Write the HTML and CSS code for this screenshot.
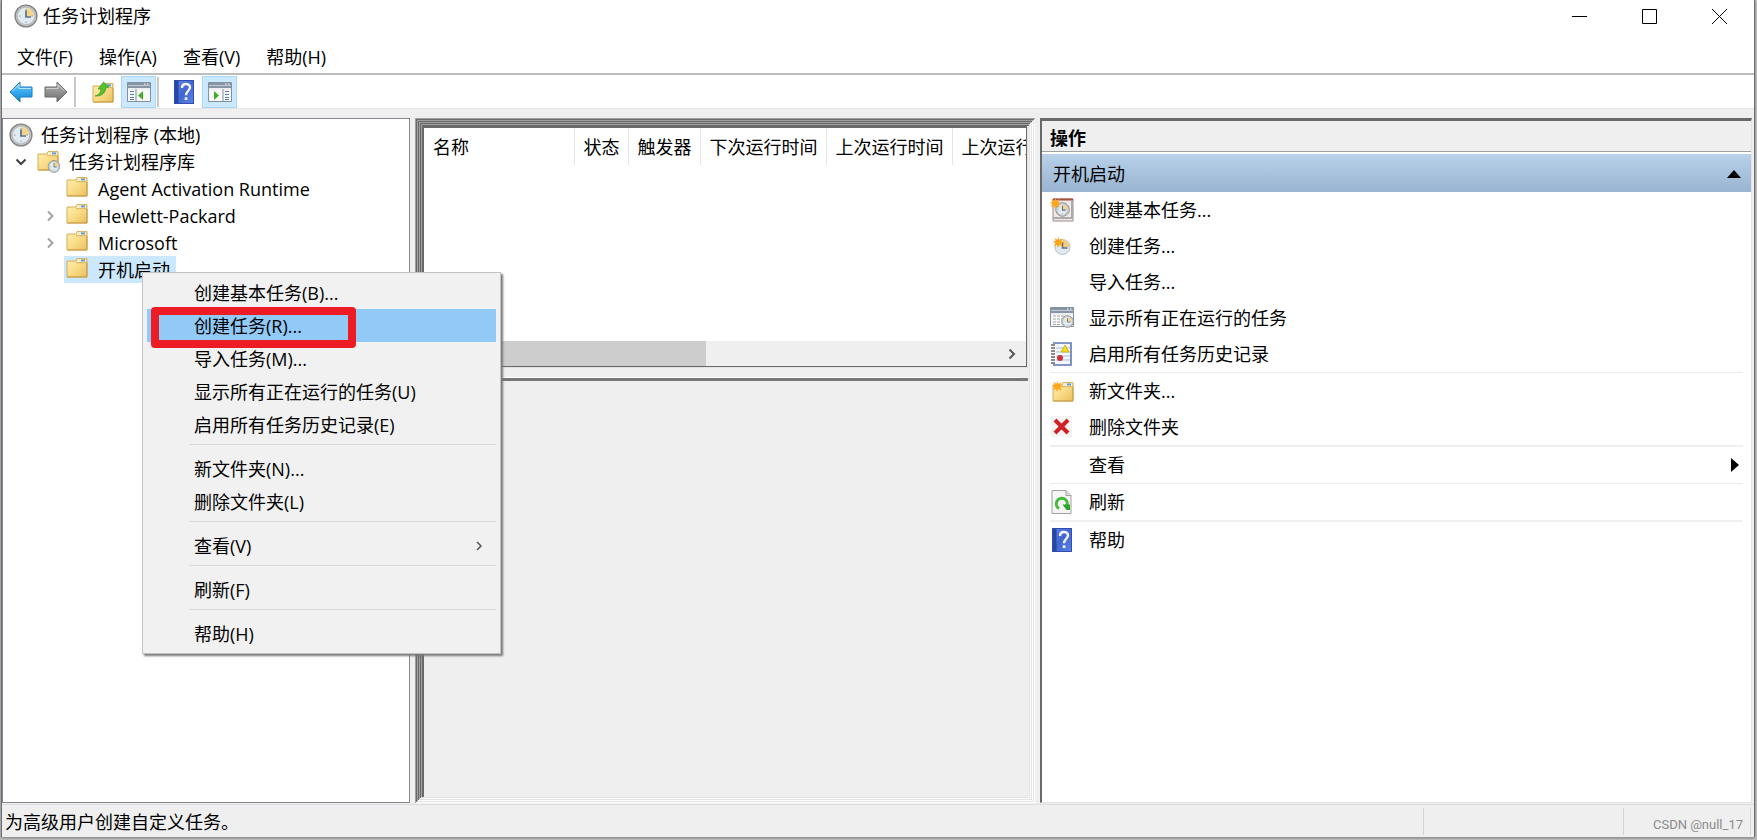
FILE: index.html
```html
<!DOCTYPE html>
<html lang="zh-CN">
<head>
<meta charset="utf-8">
<title>任务计划程序</title>
<link rel="stylesheet" href="styles.css">
</head>
<body>
<svg class="defs" aria-hidden="true">
  <defs>
    <linearGradient id="gFolder" x1="0" y1="0" x2="1" y2="1"><stop offset="0" stop-color="#fff0b5"/><stop offset=".5" stop-color="#f9dc87"/><stop offset="1" stop-color="#e9bf60"/></linearGradient>
    <linearGradient id="gBlue" x1="0" y1="0" x2="0" y2="1"><stop offset="0" stop-color="#7fd0fa"/><stop offset=".5" stop-color="#35a9ee"/><stop offset="1" stop-color="#1583cf"/></linearGradient>
    <linearGradient id="gGray" x1="0" y1="0" x2="0" y2="1"><stop offset="0" stop-color="#b5b5b5"/><stop offset="1" stop-color="#6e6e6e"/></linearGradient>
    <linearGradient id="gHelp" x1="0" y1="0" x2="1" y2="1"><stop offset="0" stop-color="#5f86e8"/><stop offset=".5" stop-color="#4466cf"/><stop offset="1" stop-color="#5c83ea"/></linearGradient>
    <linearGradient id="gRim" x1="0" y1="0" x2="1" y2="1"><stop offset="0" stop-color="#c4c4c4"/><stop offset="1" stop-color="#7d7d7d"/></linearGradient>
  </defs>
  <symbol id="clock" viewBox="0 0 24 24">
    <circle cx="12" cy="12" r="10.800" fill="#e0eaf1" stroke="#858585" stroke-width="1.600"/>
    <circle cx="12" cy="12" r="9.200" fill="none" stroke="#bdbdbd" stroke-width="1.800"/>
    <path d="M12 12V4a8 8 0 0 1 8 8z" fill="#f2d48c"/>
    <path d="M12 5v1.500M12 17.500V19M5 12h1.500M17.500 12H19" stroke="#91a3b3"/>
    <path d="M12 6.500V13h5" fill="none" stroke="#5d7186" stroke-width="1.700"/>
  </symbol>
  <symbol id="folder" viewBox="0 0 22 20">
    <path d="M1 3h9l1-2.400h10V19H1z" fill="url(#gFolder)" stroke="#d5ad5a"/>
    <rect x="11" y="1.200" width="9" height="3" fill="#f7ecc6"/>
    <path d="M10 4.700h11" stroke="#d9b262"/>
    <rect x="15" y="1.400" width="4" height="2" fill="#5c9edb"/>
    <path d="M1.500 19h19.500V5" fill="none" stroke="#c89b45"/>
  </symbol>
  <symbol id="folderclock" viewBox="0 0 24 22">
    <use href="#folder" width="22" height="20"/>
    <use href="#clock" x="10.500" y="9" width="13" height="13"/>
  </symbol>
  <symbol id="star" viewBox="0 0 12 12"><path d="M6 0l1 3.200L10.500 1 9 4.500l3 1-3 1.200L10.500 11 7 8.700 5 12 4.500 8.500 1 10l1.500-3.500L0 5l3-.8L1.500 1 5 3z" fill="#ffa51c"/></symbol>
  <symbol id="help" viewBox="0 0 20 24">
    <rect width="20" height="24" fill="url(#gHelp)"/><rect width="4.500" height="24" fill="#2547a8"/><path d="M.5.5h19v23H.5z" fill="none" stroke="#2f4eaf"/>
    <path d="M8 8c0-5.500 8-5 8-.7 0 3.300-4 3.700-4 8" fill="none" stroke="#f2f5ff" stroke-width="2.400"/><rect x="10.700" y="17.300" width="2.700" height="2.700" fill="#f2f5ff"/>
  </symbol>
  <symbol id="pane" viewBox="0 0 24 20">
    <path d="M.5.500h23v19H.5z" fill="#f8f8f8" stroke="#8290a0"/><path d="M1 1h22v5H1z" fill="#8794a6"/><path d="M1 3.500h22" stroke="#c3cbd5"/><path d="M17 2h1.500M20 2h1.500" stroke="#fff"/><path d="M1 7h22" stroke="#dfe3e8"/>
  </symbol>
</svg>

<main class="window">
  <header class="titlebar">
    <svg class="i24"><use href="#clock"/></svg>
    <h1 class="title">任务计划程序</h1>
    <button class="caption" aria-label="最小化"><svg viewBox="0 0 15 15"><path d="M0 7.500h15"/></svg></button>
    <button class="caption" aria-label="最大化"><svg viewBox="0 0 15 15"><path d="M.5.500h14v14H.5z"/></svg></button>
    <button class="caption" aria-label="关闭"><svg viewBox="0 0 15 15"><path d="M0 0l15 15M15 0L0 15"/></svg></button>
  </header>

  <nav class="menubar">
    <button>文件(F)</button><button>操作(A)</button><button>查看(V)</button><button>帮助(H)</button>
  </nav>

  <div class="toolbar" role="toolbar">
    <button aria-label="后退"><svg class="i24" viewBox="0 0 24 24"><path d="M1 12L11 2v5h12v10H11v5z" fill="url(#gBlue)" stroke="#1a7cc0" stroke-linejoin="round"/><path d="M3.500 11L10 4.500V8.500h12" fill="none" stroke="#b5e4fc"/></svg></button>
    <button aria-label="前进"><svg class="i24" viewBox="0 0 24 24"><path d="M23 12L13 2v5H1v10h12v5z" fill="url(#gGray)" stroke="#6a6a6a" stroke-linejoin="round"/><path d="M2 8.500h12V4.500l6.500 6.500" fill="none" stroke="#cdcdcd"/></svg></button>
    <span class="divider"></span>
    <button class="up" aria-label="上一级"><svg class="i24" viewBox="0 0 24 24"><use href="#folder" x="1" y="3" width="22" height="20"/><path d="M4 16c4-1 6-4 6-7H7l5.500-7L18 7l-3 .5c-.5 6-5 9-11 8.500z" fill="#55c22f" stroke="#3b9a20" stroke-width=".7"/></svg></button>
    <button class="on" aria-label="显示控制台树"><svg class="i24" viewBox="0 0 24 20"><use href="#pane"/><path d="M9 7v12.500" stroke="#8290a0"/><path d="M3 9.500h4M3 12.500h4M3 15.500h4M3 17.500h4" stroke="#4c7fb8"/><path d="M16 9v9l-5-4.500z" fill="#3fae29"/></svg></button>
    <span class="divider"></span>
    <button class="helpbtn" aria-label="帮助"><svg class="book"><use href="#help"/></svg></button>
    <button class="on" aria-label="显示操作窗格"><svg class="i24" viewBox="0 0 24 20"><use href="#pane"/><path d="M15 7v12.500" stroke="#8290a0"/><path d="M17 9.500h4M17 12.500h4M17 15.500h4M17 17.500h4" stroke="#4c7fb8"/><path d="M6 9v9l5-4.500z" fill="#3fae29"/></svg></button>
  </div>

  <div class="panes">
    <section class="tree">
      <ul>
        <li class="l0"><button><svg class="i24"><use href="#clock"/></svg><span>任务计划程序 (本地)</span></button></li>
        <li class="l1"><svg class="chev open" viewBox="0 0 12 12"><path d="M1.500 3.500L6 8l4.500-4.500"/></svg><button><svg class="i24"><use href="#folderclock"/></svg><span>任务计划程序库</span></button></li>
        <li class="l2"><span class="chev"></span><button><svg class="fold"><use href="#folder"/></svg><span>Agent Activation Runtime</span></button></li>
        <li class="l2"><svg class="chev" viewBox="0 0 12 12"><path d="M4 1.500L8.500 6 4 10.500"/></svg><button><svg class="fold"><use href="#folder"/></svg><span>Hewlett-Packard</span></button></li>
        <li class="l2"><svg class="chev" viewBox="0 0 12 12"><path d="M4 1.500L8.500 6 4 10.500"/></svg><button><svg class="fold"><use href="#folder"/></svg><span>Microsoft</span></button></li>
        <li class="l2"><span class="chev"></span><button class="selected"><svg class="fold"><use href="#folder"/></svg><span>开机启动</span></button></li>
      </ul>
    </section>

    <section class="middle">
      <div class="list">
        <div class="tablewrap">
          <table>
            <colgroup><col class="c-name"><col class="c-state"><col class="c-trig"><col class="c-time"><col class="c-time"><col></colgroup>
            <thead><tr><th>名称</th><th>状态</th><th>触发器</th><th>下次运行时间</th><th>上次运行时间</th><th>上次运行</th></tr></thead>
          </table>
        </div>
        <div class="scroll"><span class="thumb"></span><button aria-label="向右滚动"><svg viewBox="0 0 12 12"><path d="M3.500 1.500L8 6l-4.500 4.500"/></svg></button></div>
      </div>
      <div class="detail"></div>
    </section>

    <aside class="actions">
      <h2>操作</h2>
      <button class="group"><span>开机启动</span><svg viewBox="0 0 14 8"><path d="M7 0l7 8H0z"/></svg></button>
      <div class="items">
        <button><svg class="i24" viewBox="0 0 24 24"><path d="M3 1h20v22H3z" fill="#eee9e7" stroke="#9a8b87"/><path d="M3 1.500h20" stroke="#a6513c" stroke-width="2"/><path d="M3 20h19V3" fill="none" stroke="#aaa" stroke-width="2"/><use href="#clock" x="5" y="4" width="15" height="15"/><use href="#star" width="11" height="11"/></svg><span>创建基本任务...</span></button>
        <button><svg class="i24" viewBox="0 0 24 24"><circle cx="12.500" cy="13" r="7.500" fill="#dfe9ee" stroke="#b7c2c8"/><path d="M12.500 13V6a7 7 0 0 1 7 7z" fill="#f3cc7d"/><path d="M12.500 8v6h5" fill="none" stroke="#5d7186" stroke-width="1.600"/><use href="#star" x="3" y="3" width="11" height="11"/></svg><span>创建任务...</span></button>
        <button><span class="i24"></span><span>导入任务...</span></button>
        <button><svg class="i24" viewBox="0 0 24 24"><use href="#pane" y="1" width="24" height="20"/><path d="M3 10h12M3 13h9M3 16h8M3 18.500h8" stroke="#a6a6a6" stroke-dasharray="3 1"/><use href="#clock" x="11" y="9" width="13" height="13"/></svg><span>显示所有正在运行的任务</span></button>
        <button><svg class="i24" viewBox="0 0 24 24"><path d="M3 1h18v22H3z" fill="#f4f8fd"/><path d="M3 1h18v22H3" fill="none" stroke="#5e77b5" stroke-width="1.600"/><path d="M6 6h14M6 10h14M6 14h14M6 18h14" stroke="#9fc0e4"/><path d="M15 3l4 7h-8z" fill="#f6dc24" stroke="#d7b412"/><circle cx="10" cy="16" r="3" fill="#d2313c"/><path d="M1 3h4M1 6h4M1 9h4M1 12h4M1 15h4M1 18h4M1 21h4" stroke="#666" stroke-width="1.400"/></svg><span>启用所有任务历史记录</span></button>
        <hr>
        <button><svg class="i24" viewBox="0 0 24 24"><use href="#folder" x="2" y="3" width="22" height="20"/><use href="#star" x="2" y="2" width="11" height="11"/></svg><span>新文件夹...</span></button>
        <button><svg class="i24" viewBox="0 0 24 24"><path d="M1 1h21v21H1z" fill="#f5f4f3"/><path d="M5 5l13 13M18 5L5 18" stroke="#d11f26" stroke-width="4"/></svg><span>删除文件夹</span></button>
        <hr class="thick">
        <button><span class="i24"></span><span>查看</span><svg class="sub" viewBox="0 0 8 14"><path d="M0 0l8 7-8 7z"/></svg></button>
        <hr>
        <button><svg class="i24" viewBox="0 0 24 24"><path d="M2 .5h14l5 5v18H2z" fill="#f5f5f5" stroke="#a0a0a0"/><path d="M16 .5v5h5" fill="#ddd" stroke="#a0a0a0"/><path d="M9 18.500a5.500 5.500 0 1 1 8-3" fill="none" stroke="#45b93c" stroke-width="3"/><path d="M12.500 14.500h7.500v5.500h-3.500z" fill="#2da52a"/></svg><span>刷新</span></button>
        <hr class="thick">
        <button><svg class="i24"><use href="#help"/></svg><span>帮助</span></button>
      </div>
    </aside>
  </div>

  <footer class="status">
    <span class="msg">为高级用户创建自定义任务。</span>
    <span class="cell"></span>
    <span class="cell mark">CSDN @null_17</span>
  </footer>

  <div class="context" role="menu">
    <button role="menuitem">创建基本任务(B)...</button>
    <button role="menuitem" class="hot">创建任务(R)...</button>
    <button role="menuitem">导入任务(M)...</button>
    <button role="menuitem">显示所有正在运行的任务(U)</button>
    <button role="menuitem">启用所有任务历史记录(E)</button>
    <hr>
    <button role="menuitem">新文件夹(N)...</button>
    <button role="menuitem">删除文件夹(L)</button>
    <hr>
    <button role="menuitem">查看(V)<svg viewBox="0 0 12 12"><path d="M4 2l4 4-4 4"/></svg></button>
    <hr>
    <button role="menuitem">刷新(F)</button>
    <hr>
    <button role="menuitem">帮助(H)</button>
  </div>
</main>
</body>
</html>
```

FILE: styles.css
```css
*, *::after { box-sizing: border-box; }

body {
  margin: 0;
  background: #c4c4c4;
  color: #000;
  font: 18px/26px "Open Sans", "Noto Sans CJK SC", sans-serif;
}

button {
  padding: 0;
  border: 0;
  background: none;
  color: inherit;
  font: inherit;
  text-align: left;
  white-space: nowrap;
}

svg { display: block; flex: none; }
.defs { position: absolute; width: 0; height: 0; }
.i24 { width: 24px; height: 24px; flex: none; }

.window {
  position: relative;
  display: flex;
  flex-direction: column;
  height: calc(100vh - 3px);
  margin: 0 2px 3px 1px;
  border: solid #6b6e70;
  border-width: 0 1px;
  background: #efefef;
  box-shadow: 0 1px 3px #777;
}

.titlebar {
  display: flex;
  align-items: center;
  height: 32px;
  padding-left: 12px;
  background: #fff;
}
.title { flex: 1; margin: 0 0 0 5px; font-size: 18px; font-weight: 400; }
.caption { display: grid; place-items: center; width: 70px; height: 32px; }
.caption svg { width: 15px; height: 15px; fill: none; stroke: #000; }

.menubar {
  display: flex;
  gap: 26px;
  height: 43px;
  padding: 9px 15px 0;
  border-bottom: 2px solid #bcbdbf;
  background: #fff;
}

.toolbar {
  display: flex;
  align-items: center;
  height: 34px;
  padding: 1px 0 0 1px;
  border-bottom: 1px solid #e3e3e3;
  background: #fff;
}
.toolbar button { display: grid; place-items: center; width: 35px; height: 32px; }
.toolbar .on { border: 1px solid #a6d8ff; background: #cce8ff; }
.toolbar .up { margin: 0 1px 0 9px; }
.toolbar .helpbtn { margin: 0 1px 0 7px; }
.divider { width: 2px; height: 30px; margin-left: 1px; background: #c8c8c8; }
.book { width: 20px; height: 24px; }

.panes {
  display: grid;
  grid-template-columns: 408fr 620fr 712fr;
  gap: 5px;
  flex: 1;
  min-height: 0;
  padding: 9px 2px 1px 0;
}

.tree {
  padding: 2px 0 0 6px;
  border: 1px solid #828790;
  background: #fff;
}
.tree ul { margin: 0; padding: 0; list-style: none; }
.tree li { display: flex; align-items: center; height: 27px; }
.tree button { display: flex; align-items: center; gap: 8px; height: 27px; padding-right: 6px; }
.tree .l1 { padding-left: 6px; }
.tree .l2 { padding-left: 35px; }
.tree .l2 button { gap: 10px; padding-left: 2px; }
.chev { width: 12px; height: 12px; margin-right: 8px; fill: none; stroke: #a3a3a3; stroke-width: 2; }
.chev.open { margin-right: 10px; stroke: #404040; }
.fold { width: 22px; height: 20px; margin-bottom: 4px; }
.tree .selected { background: #cce8ff; }

.middle {
  display: flex;
  flex-direction: column;
  min-width: 0;
  padding: 8px 7px 8px 9px;
  box-shadow:
    inset 1px 1px #a0a0a0, inset -1px -1px #fff,
    inset 2px 2px #696969, inset -2px -2px #e3e3e3,
    inset 3px 3px #a0a0a0, inset -3px -3px #fff,
    inset 4px 4px #696969, inset -4px -4px #e3e3e3,
    inset 5px 5px #a0a0a0, inset -5px -5px #fff,
    inset 6px 6px #696969, inset -6px -6px #e3e3e3,
    inset 7px 7px #a0a0a0,
    inset 9px 8px #696969;
}
.list {
  display: flex;
  flex-direction: column;
  height: 241px;
  margin-right: 1px;
  border: 2px solid #696969;
  border-width: 2px 1px 1px 0;
  background: #fff;
  box-shadow: 1px 1px #e3e3e3;
}
.tablewrap { flex: 1; overflow: hidden; }
table { width: 100%; border-collapse: collapse; table-layout: fixed; }
th {
  height: 37px;
  padding: 0 0 0 9px;
  border-right: 1px solid #e5e5e5;
  font-weight: 400;
  text-align: left;
  white-space: nowrap;
  overflow: hidden;
}
th:last-child { border-right: 0; }
.c-name { width: 150px; }
.c-state { width: 54px; }
.c-trig { width: 72px; }
.c-time { width: 126px; }
.scroll { display: flex; align-items: center; height: 25px; padding-left: 26px; background: #efefef; }
.thumb { width: 256px; height: 25px; background: #cdcdcd; }
.scroll button { margin-left: auto; padding-right: 8px; }
.scroll svg { width: 12px; height: 12px; fill: none; stroke: #555; stroke-width: 2; }
.detail {
  flex: 1;
  margin-top: 11px;
  border-top: 3px solid #777;
  background: #efefef;
  box-shadow: 0 -9px 0 -8px #fff;
}

.actions {
  min-width: 0;
  border: 2px solid #696969;
  border-top-width: 3px;
  border-right: 1px solid #e3e3e3;
  border-bottom: 1px solid #e3e3e3;
  background: #fff;
}
.actions h2 {
  height: 31px;
  margin: 0 0 2px;
  padding: 4px 0 0 8px;
  border-bottom: 1px solid #a0a0a0;
  background: #efefef;
  font-size: 18px;
  line-height: 26px;
  font-weight: 700;
}
.group {
  display: flex;
  align-items: center;
  justify-content: space-between;
  width: 100%;
  height: 38px;
  padding: 2px 10px 0 11px;
  background: linear-gradient(#b9d1ea, #99b4d1);
}
.group svg { width: 14px; height: 8px; }
.items { padding: 0 8px; }
.items button { display: flex; align-items: center; gap: 15px; width: 100%; height: 36px; }
.items hr { height: 1px; margin: 0; border: 0; background: #ececec; }
.items .thick { height: 2px; background: #f0f0f0; }
.sub { width: 8px; height: 14px; margin-left: auto; }
.items .sub { margin-right: 4px; }

.status { display: flex; height: 33px; border-top: 1px solid #dcdcdc; padding: 3px 3px 2px; }
.msg { flex: 1; padding-top: 1px; }
.cell { width: 200px; border-left: 1px solid #d5d5d5; }
.mark {
  width: 128px;
  padding: 4px 7px 0 0;
  border-right: 1px solid #d5d5d5;
  color: #8c8c8c;
  font-family: Roboto, sans-serif;
  font-size: 13px;
  text-align: right;
}

.context {
  position: absolute;
  left: 140px;
  top: 272px;
  width: 359px;
  padding: 3px 4px;
  border: 1px solid #c3c3c3;
  background: #f1f1f1;
  box-shadow: 2px 2px 2px #777;
}
.context button {
  position: relative;
  display: flex;
  align-items: center;
  justify-content: space-between;
  width: 100%;
  height: 33px;
  padding: 0 11px 0 47px;
}
.context hr { height: 1px; margin: 3px 0 7px 42px; border: 0; background: #dadada; }
.context svg { width: 12px; height: 12px; fill: none; stroke: #555; stroke-width: 1.5; }
.context .hot { background: #91c9f7; }
.hot::after {
  content: "";
  position: absolute;
  left: 4px;
  top: -2px;
  width: 205px;
  height: 41px;
  border: 8px solid #ed1c24;
  border-radius: 4px;
}
```
